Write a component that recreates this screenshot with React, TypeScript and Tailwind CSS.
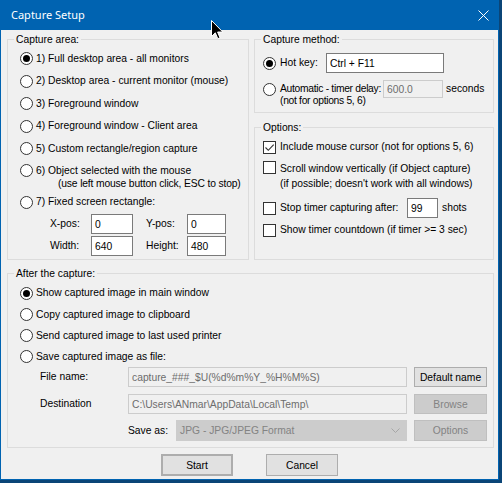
import React from "react";
import clsx from "clsx";

const Radio = ({ checked = false }: { checked?: boolean }) => (
  <span className="flex h-[13px] w-[13px] shrink-0 items-center justify-center rounded-full border border-[#333333] bg-white">
    {checked && <span className="h-[7px] w-[7px] rounded-full bg-black" />}
  </span>
);

const Check = ({ checked = false }: { checked?: boolean }) => (
  <span className="flex h-[13px] w-[13px] shrink-0 items-center justify-center border border-[#333333] bg-white">
    {checked && (
      <svg width="11" height="11" viewBox="0 0 11 11">
        <path d="M1.5 5.5 L4.3 8.3 L9.7 2.6" fill="none" stroke="#333333" strokeWidth="1.1" />
      </svg>
    )}
  </span>
);

const Group = ({
  title,
  className,
  children,
}: {
  title: string;
  className?: string;
  children: React.ReactNode;
}) => (
  <fieldset className={clsx("m-0 min-w-0 shrink-0 border border-[#dcdcdc] p-0", className)}>
    <legend className="ml-[6px] px-[2px] leading-[13px]">{title}</legend>
    {children}
  </fieldset>
);

const TextBox = ({
  value,
  className,
  disabled = false,
}: {
  value: string;
  className?: string;
  disabled?: boolean;
}) => (
  <div
    className={clsx(
      "flex shrink-0 items-center overflow-hidden whitespace-nowrap border px-[3px] leading-[13px]",
      disabled ? "border-[#cccccc] bg-[#f0f0f0] text-[#6d6d6d]" : "border-[#7a7a7a] bg-white text-black",
      className
    )}
  >
    {value}
  </div>
);

const Button = ({
  label,
  className,
  disabled = false,
}: {
  label: string;
  className?: string;
  disabled?: boolean;
}) => (
  <div
    className={clsx(
      "flex shrink-0 items-center justify-center border leading-[13px]",
      disabled ? "border-[#bfbfbf] bg-[#cccccc] text-[#838383]" : "border-[#adadad] bg-[#e1e1e1] text-black",
      className
    )}
  >
    {label}
  </div>
);

const RadioRow = ({ label, checked, h }: { label: string; checked?: boolean; h: string }) => (
  <div className={clsx("flex items-center pl-[12px]", h)}>
    <Radio checked={checked} />
    <span className="ml-[3px] whitespace-nowrap">{label}</span>
  </div>
);

export default function App() {
  return (
    <div className="relative h-[483px] w-[502px] overflow-hidden bg-[#0b4577]">
      {/* dialog window */}
      <div className="flex h-[480px] w-[499px] flex-col border border-[#0063b1] bg-[#f0f0f0]">
        <div className="flex h-[29px] shrink-0 items-center bg-[#0063b1] pl-[10px] text-white">
          <span className="font-['Segoe_UI','Noto_Sans',sans-serif] text-[11px]">Capture Setup</span>
          <svg className="ml-auto mr-[9px]" width="11" height="11" viewBox="0 0 11 11">
            <path d="M0.5 0.5 L10.5 10.5 M10.5 0.5 L0.5 10.5" stroke="white" strokeWidth="1" />
          </svg>
        </div>

        <div className="flex flex-1 flex-col pl-[6px] pr-[4px] pt-[3px] font-['Liberation_Sans',Arial,sans-serif] text-[10.3px] text-black">
          <div className="flex">
            <Group title="Capture area:" className="h-[227px] w-[242px]">
              <div className="mt-[1px] flex flex-col">
                <RadioRow h="h-[23px]" checked label="1) Full desktop area - all monitors" />
                <RadioRow h="h-[22px]" label="2) Desktop area - current monitor (mouse)" />
                <RadioRow h="h-[23px]" label="3) Foreground window" />
                <RadioRow h="h-[22px]" label="4) Foreground window - Client area" />
                <RadioRow h="h-[23px]" label="5) Custom rectangle/region capture" />
                <div className="flex h-[31px] items-start pl-[12px] pt-[4px]">
                  <Radio />
                  <div className="ml-[3px] whitespace-nowrap leading-[13px]">
                    <div>6) Object selected with the mouse</div>
                    <div className="pl-[22px] tracking-[-0.15px]">(use left mouse button click, ESC to stop)</div>
                  </div>
                </div>
                <RadioRow h="h-[22px]" label="7) Fixed screen rectangle:" />
                <div className="flex h-[22px] items-center pl-[42px]">
                  <span className="w-[41px]">X-pos:</span>
                  <TextBox value="0" className="h-[20px] w-[42px]" />
                  <span className="ml-[13px] w-[41px]">Y-pos:</span>
                  <TextBox value="0" className="h-[20px] w-[39px]" />
                </div>
                <div className="flex h-[22px] items-center pl-[42px]">
                  <span className="w-[41px]">Width:</span>
                  <TextBox value="640" className="h-[20px] w-[42px]" />
                  <span className="ml-[13px] w-[41px]">Height:</span>
                  <TextBox value="480" className="h-[20px] w-[39px]" />
                </div>
              </div>
            </Group>

            <div className="ml-[5px] flex w-[240px] flex-col">
              <Group title="Capture method:" className="h-[80px]">
                <div className="mt-[7px] flex h-[20px] items-center pl-[8px]">
                  <Radio checked />
                  <span className="ml-[4px] w-[46px] whitespace-nowrap">Hot key:</span>
                  <TextBox value="Ctrl + F11" className="h-[20px] w-[118px]" />
                </div>
                <div className="mt-[7px] flex items-start pl-[8px]">
                  <span className="mt-[3px]">
                    <Radio />
                  </span>
                  <span className="ml-[4px] mt-[3px] w-[103px] whitespace-nowrap leading-[12px] tracking-[-0.3px]">
                    Automatic - timer delay:
                    <br />
                    (not for options 5, 6)
                  </span>
                  <TextBox disabled value="600.0" className="h-[18px] w-[60px]" />
                  <span className="ml-[3px] mt-[3px] leading-[12px]">seconds</span>
                </div>
              </Group>

              <Group title="Options:" className="mt-[8px] h-[139px]">
                <div className="mt-[3px] flex h-[20px] items-center pl-[8px]">
                  <Check checked />
                  <span className="ml-[4px] whitespace-nowrap">Include mouse cursor (not for options 5, 6)</span>
                </div>
                <div className="flex h-[34px] items-start pl-[8px] pt-[4px]">
                  <Check />
                  <span className="ml-[4px] whitespace-nowrap leading-[15px]">
                    Scroll window vertically (if Object capture)
                    <br />
                    (if possible; doesn't work with all windows)
                  </span>
                </div>
                <div className="mt-[7px] flex h-[20px] items-center pl-[8px]">
                  <Check />
                  <span className="ml-[4px] w-[127px] whitespace-nowrap">Stop timer capturing after:</span>
                  <TextBox value="99" className="h-[20px] w-[31px]" />
                  <span className="ml-[4px]">shots</span>
                </div>
                <div className="mt-[2px] flex h-[20px] items-center pl-[8px]">
                  <Check />
                  <span className="ml-[4px] whitespace-nowrap">Show timer countdown (if timer &gt;= 3 sec)</span>
                </div>
              </Group>
            </div>
          </div>

          <Group title="After the capture:" className="mt-[7px] h-[181px] w-[487px]">
            <div className="mt-[2px] flex flex-col">
              <RadioRow h="h-[22px]" checked label="Show captured image in main window" />
              <RadioRow h="h-[21px]" label="Copy captured image to clipboard" />
              <RadioRow h="h-[21px]" label="Send captured image to last used printer" />
              <RadioRow h="h-[21px]" label="Save captured image as file:" />
              <div className="flex h-[20px] items-center pl-[32px]">
                <span className="w-[88px]">File name:</span>
                <TextBox disabled value="capture_###_$U(%d%m%Y_%H%M%S)" className="h-[20px] w-[279px]" />
                <Button label="Default name" className="ml-[7px] h-[20px] w-[73px]" />
              </div>
              <div className="mt-[7px] flex h-[20px] items-center pl-[32px]">
                <span className="w-[88px]">Destination</span>
                <TextBox disabled value="C:\Users\ANmar\AppData\Local\Temp\" className="h-[20px] w-[279px]" />
                <Button disabled label="Browse" className="ml-[7px] h-[20px] w-[73px]" />
              </div>
              <div className="mt-[6px] flex h-[21px] items-center pl-[120px]">
                <span className="w-[48px]">Save as:</span>
                <div className="flex h-[21px] w-[231px] items-center border border-[#cccccc] bg-[#cccccc] pl-[3px] pr-[6px] text-[#838383]">
                  <span>JPG - JPG/JPEG Format</span>
                  <svg className="ml-auto" width="9" height="5" viewBox="0 0 9 5">
                    <path d="M0.5 0.5 L4.5 4.5 L8.5 0.5" fill="none" stroke="#a6a6a6" strokeWidth="1" />
                  </svg>
                </div>
                <Button disabled label="Options" className="ml-[7px] h-[21px] w-[73px]" />
              </div>
            </div>
          </Group>

          <div className="ml-[154px] mt-[6px] flex gap-[33px]">
            <Button label="Start" className="h-[22px] w-[72px] border-2 border-[#0078d7]" />
            <Button label="Cancel" className="h-[22px] w-[72px]" />
          </div>
        </div>
      </div>

      {/* mouse pointer over the title bar */}
      <svg className="absolute left-[211px] top-[20px]" width="13" height="20" viewBox="0 0 13 20">
        <path
          d="M0.5 0.5 L0.5 16.5 L4.3 12.8 L6.8 18.7 L9 17.8 L6.6 12 L11.8 12 Z"
          fill="black"
          stroke="white"
          strokeWidth="1"
        />
      </svg>
    </div>
  );
}
